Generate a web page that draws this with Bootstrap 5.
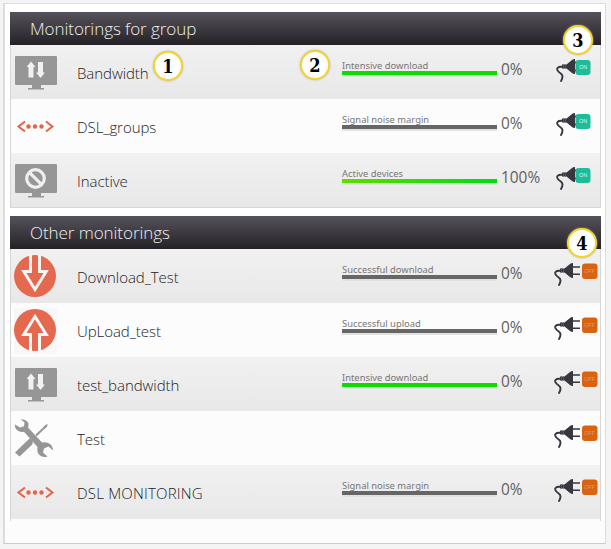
<!DOCTYPE html>
<html lang="en">
<head>
<meta charset="utf-8">
<meta name="viewport" content="width=device-width, initial-scale=1">
<title>Monitorings</title>
<link href="https://cdn.jsdelivr.net/npm/bootstrap@5.3.0/dist/css/bootstrap.min.css" rel="stylesheet">
<style>
body{background:#f4f4f4;font-family:"Open Sans","Noto Sans",sans-serif;height:549px;overflow:hidden;padding:3px 5px 5px 3px}
.frame{height:541px;background:linear-gradient(#fff 517px,#fcfcfc 517px);border:1px solid #dcdcdc;border-left:2px solid #dcdcdc;border-bottom-color:#ccc;padding:8px 4px 0 5px}
.group{width:591px;margin-bottom:8px}
.group-head{height:33px;padding-left:20px;background:linear-gradient(#55525b,#242126);color:#eee;font-size:17px;font-weight:300;line-height:33px;letter-spacing:-.06px;white-space:nowrap}
.group-body{border:solid #d6d6d6;border-width:0 1px 1px;background:#fcfcfc}
.group-body.open{border-bottom:0;padding-bottom:2px}
.item{height:54px;background:#fcfcfc;padding-left:3px}
.item:nth-child(odd){background:linear-gradient(#f1f1f1,#e8e8e8)}
.pic{width:43px;height:46px;flex:none;margin-top:5px}
.pic svg,.plug svg{display:block}
.title{width:265px;margin-left:20px;padding-top:16px;flex:none;font-size:15px;line-height:24px;font-weight:300;letter-spacing:-.06px;color:#1c1c28;white-space:nowrap}
.wide-caps{letter-spacing:.2px}
.meter{width:155px;flex:none;padding-top:15px}
.meter-name{height:11px;line-height:11px;font-size:9.400px;color:#777;font-family:"Noto Sans",sans-serif;white-space:nowrap}
.meter-bar{height:4px;background:#666;box-shadow:0 2px 0 #e2e2e2}
.meter-bar.good{background:#0cdc00}
.meter-bar.full{background:linear-gradient(90deg,#60dc00,#00dc10)}
.rate{width:56px;flex:none;padding:13px 0 0 4px;font-size:15.400px;line-height:24px;color:#606060;white-space:nowrap}
.plug{width:46px;flex:none;padding-top:12px}
.callout-no{position:absolute;width:30px;height:30px;border-radius:50%;background:#fff;border:2px solid #f3d52e;box-shadow:0 0 2px #aaa;text-align:center;font:bold 18px/27px "DejaVu Serif Condensed","DejaVu Serif",serif;color:#000}
.no1{left:153px;top:51px}.no2{left:300px;top:50px}.no3{left:563px;top:25px}.no4{left:567px;top:228px}
</style>
</head>
<body>
<svg class="d-none" aria-hidden="true">
<defs>
<symbol id="screen" viewBox="0 0 43 46"><path fill="#969696" d="M2 6H42Q43 6 43 7V34Q43 35 42 35H27V38H30V39.500H14V38H18V35H2Q1 35 1 34V7Q1 6 2 6Z"/></symbol>
<symbol id="band" viewBox="0 0 43 46"><use href="#screen"/><path fill="#f1f1f1" d="M17 11.500l4.500 5.500h-2v10.500h-5V17h-2zM26.500 28l-4.500-5.500h2V12h5v10.500h2z"/></symbol>
<symbol id="inactive" viewBox="0 0 43 46"><use href="#screen"/><g fill="none" stroke="#efefef" stroke-width="3.200"><circle cx="21.500" cy="20.500" r="8.800"/><path d="M15.300 14.300l12.400 12.400"/></g></symbol>
<symbol id="dsl" viewBox="0 0 43 46"><path d="M11 17.500L4.500 22.500L11 27.500M32 17.500L38.500 22.500L32 27.500" fill="none" stroke="#e26449" stroke-width="2"/><g fill="#e26449"><circle cx="14.500" cy="22.500" r="2.200"/><circle cx="21" cy="22.500" r="2.200"/><circle cx="27.500" cy="22.500" r="2.200"/></g></symbol>
<symbol id="down" viewBox="0 0 43 46"><circle cx="21" cy="22" r="21" fill="#e4694f"/><path d="M16.500 0V17.500H9.800L21 35.500L32.200 17.500H25.500V0" fill="none" stroke="#f4f4f4" stroke-width="3"/></symbol>
<symbol id="up" viewBox="0 0 43 46"><path fill="#f7f7f7" d="M0 0h43v46H0z"/><circle cx="21" cy="22" r="21" fill="#e4694f"/><path d="M16.500 44V26.500H9.800L21 8.500L32.200 26.500H25.500V44" fill="none" stroke="#f8f8f8" stroke-width="3"/></symbol>
<symbol id="tools" viewBox="0 0 43 46"><g fill="#969696"><path d="M6.500 3.500q6-.5 8 4l-.3 4.200L28 26.500q5-1 8 1.500t3 6.500l-4.500-4-4.500 2-1 4 4.500 4q-5 1.500-8-1.500t-2-8L10 15.800q-4 1-6.800-1.500T1 8.500l5 3 4-1.200.5-4z"/><path d="M15.500 22.500q2 .3 3 2.500t-.5 3.800L5.500 40.500 1 36.500z"/><path d="M21.500 18.500L28.500 12l2.800-3 2.500-1-1 3-3.500 3-6.800 6.500z"/></g></symbol>
<symbol id="lead-cord" viewBox="0 0 46 30"><path d="M9 9.800H6Q1.500 10 2.200 12.800Q3 15 6 16.800Q9 19 6 24" fill="none" stroke="#393541" stroke-width="1.900" stroke-linecap="round"/><path fill="#393541" d="M7 7.500h4.500L17 3q1-1 3-1v15q-2 0-3-1l-5.500-4.500H7z"/><path d="M8.500 7v5M10.500 7v5" stroke="#706d76" stroke-width=".6"/></symbol>
<symbol id="plug-on" viewBox="0 0 46 30"><g transform="translate(2 0)"><use href="#lead-cord" width="46" height="30"/><path d="M19 5.500h4M19 13.500h4" stroke="#393541" stroke-width="2"/><rect x="20.500" y="3" width="15" height="15" rx="3" fill="#20bb9a"/><text x="28" y="12.400" text-anchor="middle" font-family="Liberation Sans" font-size="5.500" fill="#c5fff3">ON</text></g></symbol>
<symbol id="plug-off" viewBox="0 0 46 30"><use href="#lead-cord" width="46" height="30"/><path d="M19 6h8M19 13.200h8" stroke="#393541" stroke-width="1.400"/><rect x="29" y="2.500" width="15.500" height="15.500" rx="3" fill="#db620e"/><text x="36.700" y="12" text-anchor="middle" font-family="Liberation Sans" font-size="5.500" fill="#b5a598">OFF</text></symbol>
</defs>
</svg>
<main class="frame">
<section class="group">
<h1 class="group-head mb-0">Monitorings for group</h1>
<div class="group-body">
<div class="item d-flex"><div class="pic"><svg width="43" height="46"><use href="#band"/></svg></div><div class="title">Bandwidth</div><div class="meter"><div class="meter-name">Intensive download</div><div class="meter-bar good"></div></div><div class="rate">0%</div><div class="plug"><svg width="46" height="30"><use href="#plug-on"/></svg></div></div>
<div class="item d-flex"><div class="pic"><svg width="43" height="46"><use href="#dsl"/></svg></div><div class="title">DSL_groups</div><div class="meter"><div class="meter-name">Signal noise margin</div><div class="meter-bar"></div></div><div class="rate">0%</div><div class="plug"><svg width="46" height="30"><use href="#plug-on"/></svg></div></div>
<div class="item d-flex"><div class="pic"><svg width="43" height="46"><use href="#inactive"/></svg></div><div class="title">Inactive</div><div class="meter"><div class="meter-name">Active devices</div><div class="meter-bar full"></div></div><div class="rate">100%</div><div class="plug"><svg width="46" height="30"><use href="#plug-on"/></svg></div></div>
</div>
</section>
<section class="group">
<h2 class="group-head mb-0">Other monitorings</h2>
<div class="group-body open">
<div class="item d-flex"><div class="pic"><svg width="43" height="46"><use href="#down"/></svg></div><div class="title">Download_Test</div><div class="meter"><div class="meter-name">Successful download</div><div class="meter-bar"></div></div><div class="rate">0%</div><div class="plug"><svg width="46" height="30"><use href="#plug-off"/></svg></div></div>
<div class="item d-flex"><div class="pic"><svg width="43" height="46"><use href="#up"/></svg></div><div class="title">UpLoad_test</div><div class="meter"><div class="meter-name">Successful upload</div><div class="meter-bar"></div></div><div class="rate">0%</div><div class="plug"><svg width="46" height="30"><use href="#plug-off"/></svg></div></div>
<div class="item d-flex"><div class="pic"><svg width="43" height="46"><use href="#band"/></svg></div><div class="title">test_bandwidth</div><div class="meter"><div class="meter-name">Intensive download</div><div class="meter-bar good"></div></div><div class="rate">0%</div><div class="plug"><svg width="46" height="30"><use href="#plug-off"/></svg></div></div>
<div class="item d-flex"><div class="pic"><svg width="43" height="46"><use href="#tools"/></svg></div><div class="title">Test</div><div class="meter"></div><div class="rate"></div><div class="plug"><svg width="46" height="30"><use href="#plug-off"/></svg></div></div>
<div class="item d-flex"><div class="pic"><svg width="43" height="46"><use href="#dsl"/></svg></div><div class="title wide-caps">DSL MONITORING</div><div class="meter"><div class="meter-name">Signal noise margin</div><div class="meter-bar"></div></div><div class="rate">0%</div><div class="plug"><svg width="46" height="30"><use href="#plug-off"/></svg></div></div>
</div>
</section>
</main>
<span class="callout-no no1">1</span>
<span class="callout-no no2">2</span>
<span class="callout-no no3">3</span>
<span class="callout-no no4">4</span>
<script src="https://cdn.jsdelivr.net/npm/bootstrap@5.3.0/dist/js/bootstrap.bundle.min.js"></script>
</body>
</html>
